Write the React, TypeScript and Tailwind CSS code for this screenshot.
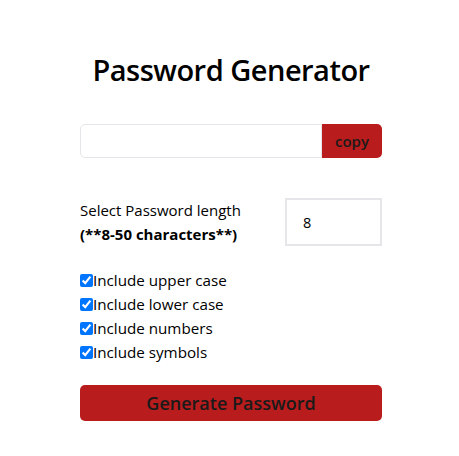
import React from "react";

export default function App() {
  const opts = ["Include upper case", "Include lower case", "Include numbers", "Include symbols"];
  return (
    <div className="min-h-[456px] bg-white text-black" style={{ fontFamily: '"Open Sans", "Noto Sans", sans-serif' }}>
      <div className="ml-[80px] w-[302px] pt-[48px]">
        <h1 className="text-center text-[29px] font-semibold leading-[44px] tracking-[-0.5px]">Password Generator</h1>
        <div className="mt-[32px] flex h-[34px]">
          <input readOnly className="h-full flex-1 rounded-l-[5px] border border-[#e6e6ea] outline-none" />
          <button className="h-full w-[60px] rounded-r-[5px] bg-[#b91c1c] text-[15px] font-semibold text-[#1a1a1a]">copy</button>
        </div>
        <div className="mt-[40px] flex items-center justify-between">
          <div className="text-[15px] leading-[24px]">
            <div>Select Password length</div>
            <div className="font-bold">(**8-50 characters**)</div>
          </div>
          <input
            type="number"
            defaultValue={8}
            className="h-[48px] w-[97px] border-2 border-[#e6e6ea] pl-[16px] text-[14.5px] outline-none"
          />
        </div>
        <div className="mt-[22px] flex flex-col">
          {opts.map((o) => (
            <label key={o} className="flex h-[24px] items-center text-[15.2px]">
              <input type="checkbox" defaultChecked className="m-0 h-[13px] w-[13px] accent-[#0075ff]" />
              <span>{o}</span>
            </label>
          ))}
        </div>
        <button className="mt-[21px] h-[36px] w-full rounded-[5px] bg-[#b91c1c] text-[18px] font-semibold text-[#1a1a1a]">
          Generate Password
        </button>
      </div>
    </div>
  );
}
